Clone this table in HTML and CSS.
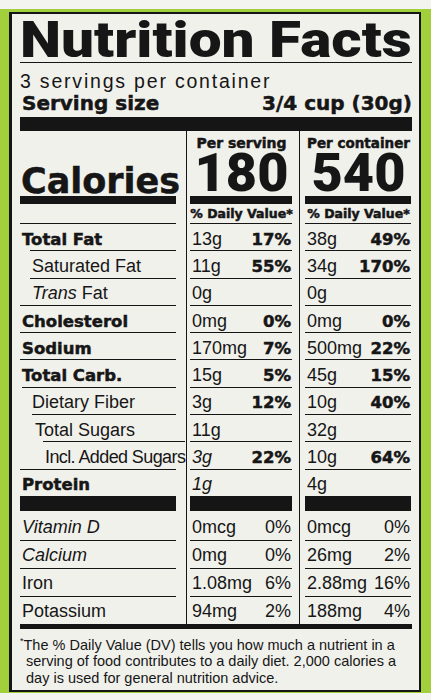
FILE: index.html
```html
<!DOCTYPE html>
<html lang="en">
<head>
    <meta charset="UTF-8">
    <meta name="viewport" content="width=device-width, initial-scale=1.0">
    <title>Nutrition Facts</title>
    <link rel="stylesheet" href="styles.css">
</head>
<body>
    <div class="frame">
        <div class="label">
            <h1 class="title"><span>Nutrition Facts</span></h1>
            <div class="servings">3 servings per container</div>
            <div class="serving-size">
                <span>Serving size</span>
                <span>3/4 cup (30g)</span>
            </div>

            <div class="table">
                <div class="row cal-row">
                    <div class="c1"><div class="in calories">Calories</div></div>
                    <div class="c2"><div class="in per"><span class="per-label">Per serving</span><span class="big">180</span></div></div>
                    <div class="c3"><div class="in per"><span class="per-label">Per container</span><span class="big">540</span></div></div>
                </div>
                <div class="row dv-row">
                    <div class="c1"><div class="in"></div></div>
                    <div class="c2"><div class="in dv">% Daily Value*</div></div>
                    <div class="c3"><div class="in dv">% Daily Value*</div></div>
                </div>

                <div class="row">
                    <div class="c1"><div class="in strong">Total Fat</div></div>
                    <div class="c2"><div class="in"><span>13g</span><b>17%</b></div></div>
                    <div class="c3"><div class="in"><span>38g</span><b>49%</b></div></div>
                </div>
                <div class="row">
                    <div class="c1"><div class="in sub">Saturated Fat</div></div>
                    <div class="c2"><div class="in"><span>11g</span><b>55%</b></div></div>
                    <div class="c3"><div class="in"><span>34g</span><b>170%</b></div></div>
                </div>
                <div class="row">
                    <div class="c1"><div class="in sub"><span><i>Trans</i> Fat</span></div></div>
                    <div class="c2"><div class="in"><span>0g</span></div></div>
                    <div class="c3"><div class="in"><span>0g</span></div></div>
                </div>
                <div class="row">
                    <div class="c1"><div class="in strong">Cholesterol</div></div>
                    <div class="c2"><div class="in"><span>0mg</span><b>0%</b></div></div>
                    <div class="c3"><div class="in"><span>0mg</span><b>0%</b></div></div>
                </div>
                <div class="row">
                    <div class="c1"><div class="in strong">Sodium</div></div>
                    <div class="c2"><div class="in"><span>170mg</span><b>7%</b></div></div>
                    <div class="c3"><div class="in"><span>500mg</span><b>22%</b></div></div>
                </div>
                <div class="row">
                    <div class="c1"><div class="in strong">Total Carb.</div></div>
                    <div class="c2"><div class="in"><span>15g</span><b>5%</b></div></div>
                    <div class="c3"><div class="in"><span>45g</span><b>15%</b></div></div>
                </div>
                <div class="row">
                    <div class="c1"><div class="in fiber">Dietary Fiber</div></div>
                    <div class="c2"><div class="in"><span>3g</span><b>12%</b></div></div>
                    <div class="c3"><div class="in"><span>10g</span><b>40%</b></div></div>
                </div>
                <div class="row">
                    <div class="c1"><div class="in sugars">Total Sugars</div></div>
                    <div class="c2"><div class="in"><span>11g</span></div></div>
                    <div class="c3"><div class="in"><span>32g</span></div></div>
                </div>
                <div class="row">
                    <div class="c1"><div class="in added">Incl. Added Sugars</div></div>
                    <div class="c2"><div class="in"><i>3g</i><b>22%</b></div></div>
                    <div class="c3"><div class="in"><span>10g</span><b>64%</b></div></div>
                </div>
                <div class="row">
                    <div class="c1"><div class="in strong">Protein</div></div>
                    <div class="c2"><div class="in"><i>1g</i></div></div>
                    <div class="c3"><div class="in"><span>4g</span></div></div>
                </div>

                <div class="row vit first">
                    <div class="c1"><div class="in"><i>Vitamin D</i></div></div>
                    <div class="c2"><div class="in"><span>0mcg</span><span>0%</span></div></div>
                    <div class="c3"><div class="in"><span>0mcg</span><span>0%</span></div></div>
                </div>
                <div class="row vit">
                    <div class="c1"><div class="in"><i>Calcium</i></div></div>
                    <div class="c2"><div class="in"><span>0mg</span><span>0%</span></div></div>
                    <div class="c3"><div class="in"><span>26mg</span><span>2%</span></div></div>
                </div>
                <div class="row vit">
                    <div class="c1"><div class="in">Iron</div></div>
                    <div class="c2"><div class="in"><span>1.08mg</span><span>6%</span></div></div>
                    <div class="c3"><div class="in"><span>2.88mg</span><span>16%</span></div></div>
                </div>
                <div class="row vit">
                    <div class="c1"><div class="in">Potassium</div></div>
                    <div class="c2"><div class="in"><span>94mg</span><span>2%</span></div></div>
                    <div class="c3"><div class="in"><span>188mg</span><span>4%</span></div></div>
                </div>
            </div>

            <p class="footnote"><sup>*</sup>The % Daily Value (DV) tells you how much a nutrient in a serving of food contributes to a daily diet. 2,000 calories a day is used for general nutrition advice.</p>
        </div>
    </div>
</body>
</html>
```

FILE: styles.css
```css
body {
    margin: 0;
    background-color: #f3f3ef;
    font-family: "Liberation Sans", Arial, sans-serif;
    color: #161616;
}

.frame {
    margin-top: 9px;
    height: 684px;
    box-sizing: border-box;
    padding: 3px 10px 0 9px;
    background-color: #a2cf3c;
}

.label {
    height: 680px;
    box-sizing: border-box;
    border: 2px solid #151515;
    border-left-width: 3px;
    padding: 0 7px 0 8px;
    background-color: #f1f1ec;
}

/* wide black face for the bold parts */
.serving-size,
.calories,
.per-label,
.dv,
.strong,
.in b {
    font-family: "DejaVu Sans", sans-serif;
    font-weight: 700;
    -webkit-text-stroke: 0.5px currentColor;
}

.title,
.big {
    font-family: Roboto, "Liberation Sans", sans-serif;
    font-weight: 900;
}

.title {
    margin: 0;
    padding-top: 5px;
    font-size: 50px;
    line-height: 43px;
    border-bottom: 1.5px solid #151515;
    white-space: nowrap;
}

.title span {
    display: inline-block;
    line-height: 43px;
    transform: scaleX(1.17);
    transform-origin: left center;
}

.servings {
    margin-top: 8px;
    font-size: 19.5px;
    line-height: 21px;
    letter-spacing: 1.8px;
}

.serving-size {
    display: flex;
    justify-content: space-between;
    font-size: 20px;
    line-height: 22px;
    padding: 0 0 2.5px 2px;
    border-bottom: 14px solid #151515;
}

/* table */

.row {
    display: grid;
    grid-template-columns: 166px 113px 113px;
    height: 27.3px;
}

.c2,
.c3 {
    border-left: 1.5px solid #151515;
}

.c1 {
    padding-right: 10px;
}

.c2 {
    padding: 0 7px 0 3px;
}

.c3 {
    padding: 0 1px 0 5px;
}

.in {
    height: 100%;
    box-sizing: border-box;
    display: flex;
    align-items: center;
    justify-content: space-between;
    border-top: 1px solid #151515;
    padding: 4px 1px 0 2px;
    font-size: 18px;
    white-space: nowrap;
}

.in b {
    font-size: 16.5px;
}

.strong {
    font-size: 16.5px;
}

.sub {
    margin-left: 10px;
}

.fiber {
    margin-left: 2px;
    padding-left: 10px;
}

.sugars {
    margin-left: 12px;
    padding-left: 3px;
}

.added {
    margin-left: 23px;
    margin-right: -9px;
    letter-spacing: -0.6px;
}

.cal-row {
    height: 65px;
}

.cal-row .in {
    border-top: none;
    padding-top: 0;
}

.calories {
    align-items: flex-end;
    font-size: 35px;
    line-height: 30px;
    padding-left: 1px;
}

.per {
    flex-direction: column;
    align-items: center;
    justify-content: flex-start;
}

.per-label {
    font-size: 14px;
    line-height: 14px;
    margin-top: 5px;
}

.c3 .per-label {
    font-size: 13.5px;
}

.big {
    font-size: 54px;
    line-height: 41px;
    margin-top: 2px;
}

.dv-row {
    height: 27.5px;
}

.dv-row .in {
    border-top-width: 8px;
    padding-top: 0;
}

.dv {
    justify-content: center;
    font-size: 12.5px;
}

.vit {
    height: 28px;
}

.vit .in {
    padding-top: 2px;
}

.vit.first {
    height: 44px;
}

.vit.first .in {
    border-top-width: 15px;
    padding-top: 4px;
}

.footnote {
    margin: 0;
    border-top: 5px solid #151515;
    padding: 4px 0 0 6px;
    text-indent: -6px;
    font-size: 14.5px;
    line-height: 16.5px;
}

.footnote sup {
    font-size: 9px;
}
```
